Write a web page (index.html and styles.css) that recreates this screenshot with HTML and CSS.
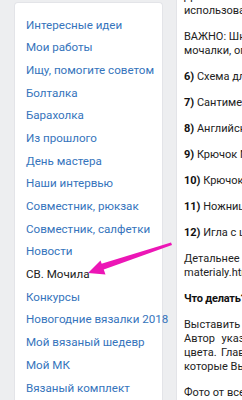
FILE: index.html
```html
<!DOCTYPE html>
<html lang="ru">
<head>
<meta charset="utf-8">
<link rel="stylesheet" href="styles.css">
</head>
<body>
<div class="page">
  <nav class="side">
    <a class="item" href="#">Интересные идеи</a>
    <a class="item" href="#">Мои работы</a>
    <a class="item" href="#">Ищу, помогите советом</a>
    <a class="item" href="#">Болталка</a>
    <a class="item" href="#">Барахолка</a>
    <a class="item" href="#">Из прошлого</a>
    <a class="item" href="#">День мастера</a>
    <a class="item" href="#">Наши интервью</a>
    <a class="item" href="#">Совместник, рюкзак</a>
    <a class="item" href="#">Совместник, салфетки</a>
    <a class="item" href="#">Новости</a>
    <span class="item current">СВ. Мочила</span>
    <a class="item" href="#">Конкурсы</a>
    <a class="item" href="#">Новогодние вязалки 2018</a>
    <a class="item" href="#">Мой вязаный шедевр</a>
    <a class="item" href="#">Мой МК</a>
    <a class="item" href="#">Вязаный комплект</a>
  </nav>
  <main class="post">
    <p class="para"><span class="ln">Для вязания мочалки можно</span><span class="ln">использовать любой шнур или пряжу.</span></p>
    <p class="para"><span class="ln">ВАЖНО: Шнур должен быть жёстким, для</span><span class="ln">мочалки, определённого цвета.</span></p>
    <p class="para"><b>6)</b> Схема для вязания</p>
    <p class="para"><b>7)</b> Сантиметровая лента</p>
    <p class="para"><b>8)</b> Английская булавка</p>
    <p class="para"><b>9)</b> Крючок Металлический</p>
    <p class="para"><b>10)</b> Крючок для сборки</p>
    <p class="para"><b>11)</b> Ножницы</p>
    <p class="para"><b>12)</b> Игла с широким ушком</p>
    <p class="para"><span class="ln j">Детальнее о материалах тут:</span><span class="ln">materialy.html</span></p>
    <p class="para"><b class="tight">Что делать?</b></p>
    <p class="para"><span class="ln j">Выставить фото мочалки в альбом</span><span class="ln j">Автор указывает размер, вид шнура и его</span><span class="ln j">цвета. Главное условие конкурса &mdash; мочалки</span><span class="ln">которые Вы связали сами.</span></p>
    <p class="para"><span class="ln j">Фото от всех участников принимаются до конца</span></p>
  </main>
</div>
<svg class="arrow" width="242" height="400" viewBox="0 0 242 400" aria-hidden="true">
  <polygon points="171,242.5 172,245 101,270.5 99,264.5" fill="#ec16b6"/>
  <polygon points="88,273 100.5,260.5 105.5,274.5" fill="#ec16b6"/>
</svg>
</body>
</html>
```
FILE: styles.css
```css
html, body {
  margin: 0;
  padding: 0;
}
body {
  width: 242px;
  height: 400px;
  overflow: hidden;
  background: #edeef0;
  font-family: Roboto, "Open Sans", Arial, sans-serif;
  position: relative;
}
.page {
  display: flex;
  align-items: flex-start;
  padding-left: 14px;
  gap: 13px;
}
.side {
  flex: 0 0 149px;
  box-sizing: border-box;
  width: 149px;
  height: 420px;
  margin-top: 2px;
  background: #fff;
  border: 1px solid #e3e4e8;
  border-bottom: none;
  border-radius: 4px 4px 0 0;
  padding: 10.5px 0 0 11px;
  display: flex;
  flex-direction: column;
}
.item {
  display: block;
  height: 22.7px;
  line-height: 22.7px;
  font-size: 11.6px;
  color: #3574bc;
  text-decoration: none;
  white-space: nowrap;
}
.item.current {
  color: #222;
}
.post {
  flex: 0 0 360px;
  width: 360px;
  box-sizing: border-box;
  margin-top: -19px;
  height: 440px;
  background: #fff;
  border-left: 1px solid #e3e4e8;
  padding: 9px 0 0 7px;
  font-size: 11px;
  line-height: 14px;
  color: #222;
}
.para {
  margin: 0 0 12px;
  white-space: nowrap;
}
.ln {
  display: block;
  white-space: nowrap;
}
.ln.j {
  width: 240px;
  text-align: justify;
  text-align-last: justify;
}
.post b {
  font-weight: 700;
  color: #111;
}
.post b.tight {
  letter-spacing: -0.2px;
}
.arrow {
  position: absolute;
  left: 0;
  top: 0;
  pointer-events: none;
}
```
